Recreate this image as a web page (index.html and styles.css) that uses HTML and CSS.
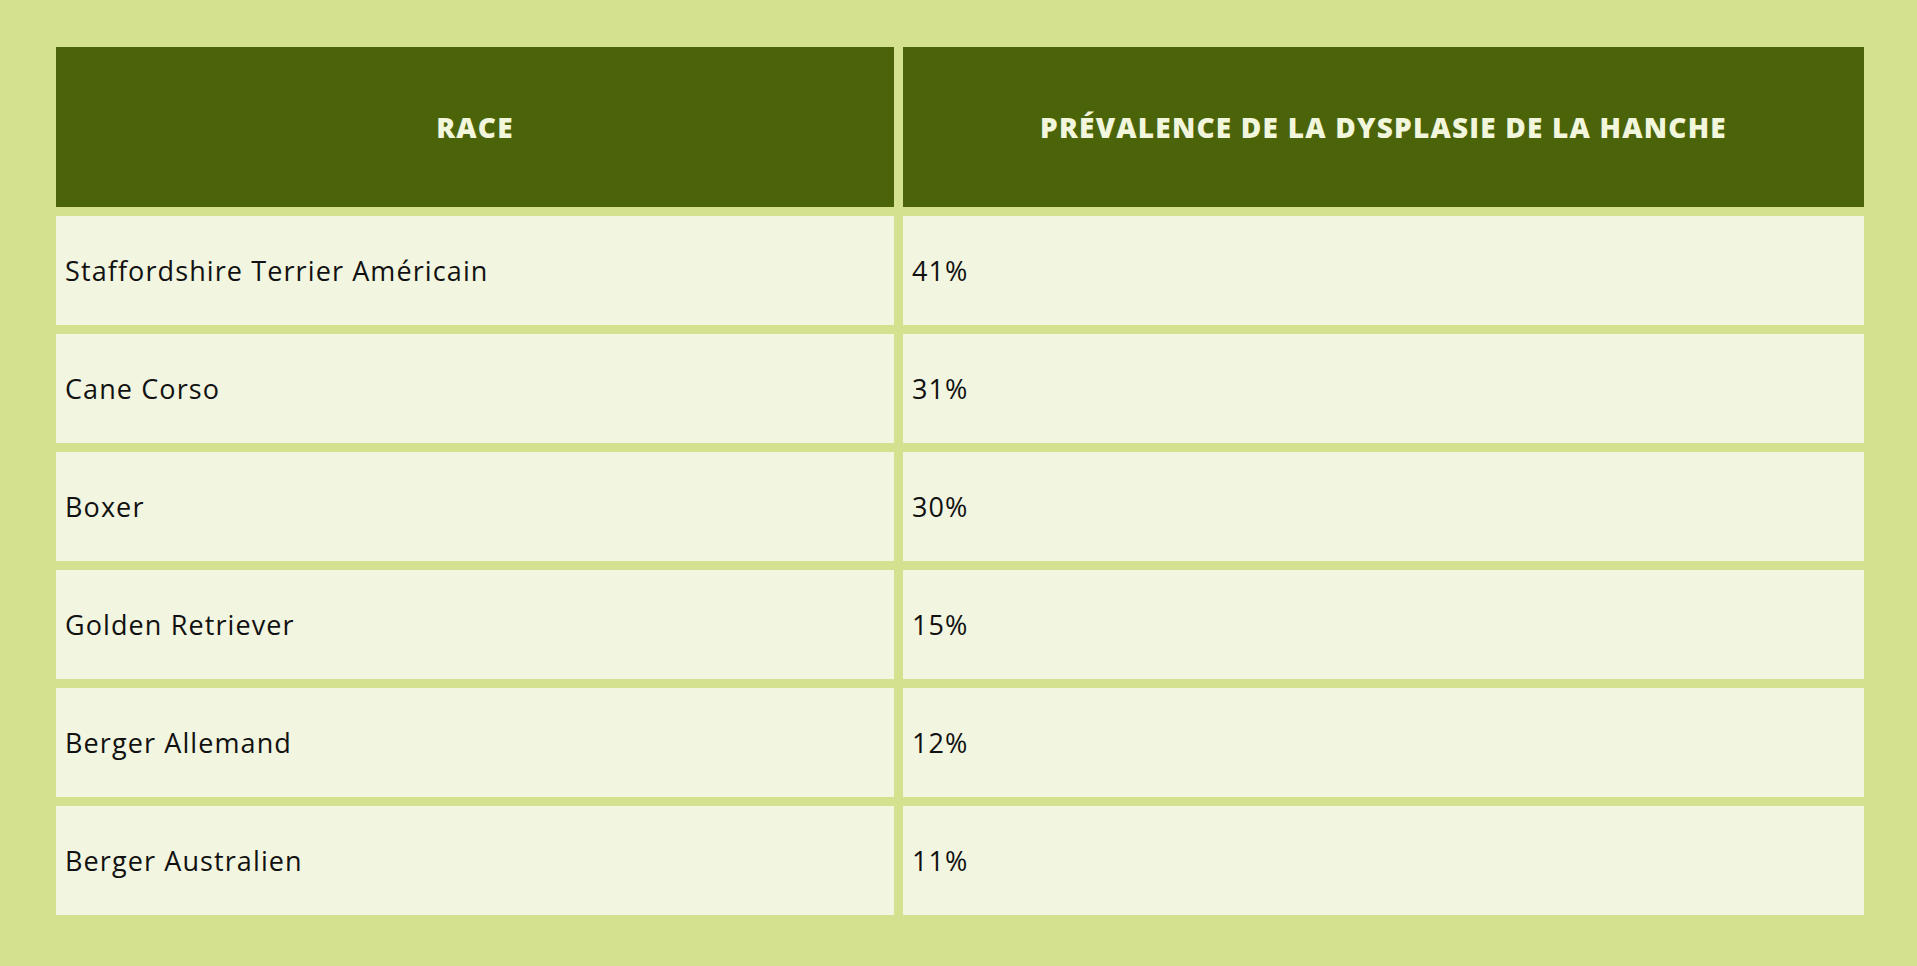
FILE: index.html
```html
<!DOCTYPE html>
<html lang="fr">
<head>
<meta charset="utf-8">
<title>Dysplasie de la hanche</title>
<link rel="stylesheet" href="styles.css">
</head>
<body>
<table class="data-table">
  <colgroup>
    <col class="col-race">
    <col class="col-prev">
  </colgroup>
  <thead>
    <tr>
      <th>RACE</th>
      <th>PRÉVALENCE DE LA DYSPLASIE DE LA HANCHE</th>
    </tr>
  </thead>
  <tbody>
    <tr><td>Staffordshire Terrier Américain</td><td>41%</td></tr>
    <tr><td>Cane Corso</td><td>31%</td></tr>
    <tr><td>Boxer</td><td>30%</td></tr>
    <tr><td>Golden Retriever</td><td>15%</td></tr>
    <tr><td>Berger Allemand</td><td>12%</td></tr>
    <tr><td>Berger Australien</td><td>11%</td></tr>
  </tbody>
</table>
</body>
</html>
```

FILE: styles.css
```css
html, body {
  margin: 0;
  background: #d4e18f;
}
body {
  padding: 38px 44px 0 47px;
  font-family: "Open Sans", "DejaVu Sans", sans-serif;
  color: #111111;
}
.data-table {
  border-collapse: separate;
  border-spacing: 9px;
  table-layout: fixed;
  width: 1826px;
}
.col-race { width: 838px; }
.col-prev { width: 961px; }
.data-table th {
  height: 160px;
  padding: 0;
  background: #4b6309;
  color: #f1f6dc;
  font-weight: 800;
  font-size: 28px;
  letter-spacing: 1.2px;
  text-align: center;
  vertical-align: middle;
}
.data-table td {
  height: 109px;
  padding: 0 0 0 9px;
  background: #f2f5df;
  font-size: 27px;
  letter-spacing: 1.1px;
  text-align: left;
  vertical-align: middle;
}
```
